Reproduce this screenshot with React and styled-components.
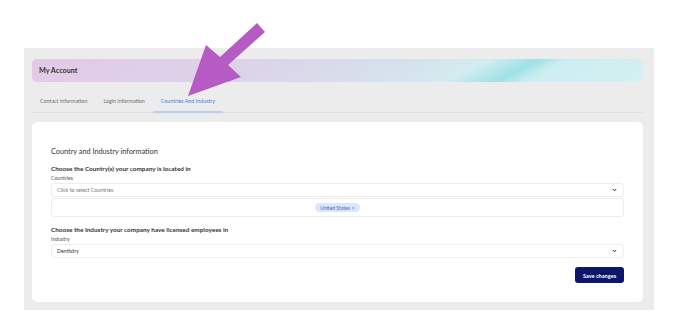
import styled, { createGlobalStyle } from "styled-components";

const GlobalStyle = createGlobalStyle`
  html, body {
    margin: 0;
    padding: 0;
    background: #ffffff;
    font-family: "Lato", "Open Sans", sans-serif;
  }
`;

const Page = styled.div`
  position: relative;
  width: 688px;
  height: 324px;
  padding: 48px 0 0 24px;
  box-sizing: border-box;
`;

const Panel = styled.div`
  width: 630px;
  height: 262px;
  background: #ececec;
  padding: 11px 11px 8px 8px;
  box-sizing: border-box;
  display: flex;
  flex-direction: column;
`;

const Banner = styled.div`
  height: 23px;
  border-radius: 5px;
  background: linear-gradient(
    152deg,
    #e3c9e6 0%,
    #dcd3e9 35%,
    #d6e2ec 60%,
    #d3ecf0 70%,
    #ade4e9 75.5%,
    #9fe1e7 77.5%,
    #cdeef1 82%,
    #d3eff1 100%
  );
  display: flex;
  align-items: center;
  padding-left: 7px;
  font-size: 7.2px;
  font-weight: 700;
  color: #333333;
`;

const Tabs = styled.div`
  margin-top: 8px;
  height: 22px;
  display: flex;
  border-bottom: 1px solid #e0e0e0;
`;

const Tab = styled.div`
  padding: 0 8px;
  display: flex;
  align-items: center;
  font-size: 5.35px;
  color: ${(p) => (p.$active ? "#4c7be3" : "#707070")};
  border-bottom: 2px solid ${(p) => (p.$active ? "#bccdf3" : "transparent")};
  margin-bottom: -1px;
`;

const Card = styled.div`
  margin-top: 9px;
  flex: 1;
  background: #ffffff;
  border-radius: 5px;
  padding: 25px 19px 0 19px;
  display: flex;
  flex-direction: column;
`;

const Title = styled.div`
  font-size: 7.3px;
  font-weight: 400;
  color: #333333;
  line-height: 10px;
`;

const Question = styled.div`
  margin-top: ${(p) => p.$mt}px;
  font-size: 6.4px;
  font-weight: 700;
  color: #333333;
  line-height: 8px;
`;

const FieldLabel = styled.div`
  font-size: 5.2px;
  color: #555555;
  line-height: 10px;
`;

const Select = styled.div`
  height: 14px;
  border: 1px solid #ededed;
  border-radius: 3px;
  box-sizing: border-box;
  display: flex;
  align-items: center;
  justify-content: space-between;
  padding: 0 6px 0 5px;
  font-size: 5.3px;
  color: ${(p) => (p.$muted ? "#777777" : "#3a3a3a")};
`;

const TagBox = styled.div`
  margin-top: 1px;
  height: 19px;
  border: 1px solid #ededed;
  border-radius: 3px;
  box-sizing: border-box;
  display: flex;
  align-items: center;
  justify-content: center;
`;

const Tag = styled.span`
  background: #dbe6fb;
  color: #4b67b0;
  font-size: 5px;
  border-radius: 5px;
  padding: 1.5px 5px;
  display: inline-flex;
  align-items: center;
  gap: 2px;
`;

const Actions = styled.div`
  margin-top: 9px;
  display: flex;
  justify-content: flex-end;
`;

const SaveButton = styled.button`
  width: 49px;
  height: 16px;
  border: none;
  border-radius: 3px;
  background: #0c176b;
  color: #ffffff;
  font-family: "Lato", "Open Sans", sans-serif;
  font-size: 5.6px;
  font-weight: 700;
  padding: 0;
`;

const Arrow = styled.svg`
  position: absolute;
  left: 0;
  top: 0;
  pointer-events: none;
`;

const Chevron = () => (
  <svg width="5" height="4" viewBox="0 0 5 4">
    <path d="M0.8 1 L2.5 2.8 L4.2 1" fill="none" stroke="#333" strokeWidth="1" />
  </svg>
);

export default function App() {
  return (
    <>
      <GlobalStyle />
      <Page>
        <Panel>
          <Banner>My Account</Banner>
          <Tabs>
            <Tab>Contact Information</Tab>
            <Tab>Login Information</Tab>
            <Tab $active>Countries And Industry</Tab>
          </Tabs>
          <Card>
            <Title>Country and Industry information</Title>
            <Question $mt={8}>Choose the Country(s) your company is located in</Question>
            <FieldLabel>Countries</FieldLabel>
            <Select $muted>
              Click to select Countries
              <Chevron />
            </Select>
            <TagBox>
              <Tag>
                United States <span>×</span>
              </Tag>
            </TagBox>
            <Question $mt={9}>Choose the Industry your company have licensed employees in</Question>
            <FieldLabel>Industry</FieldLabel>
            <Select>
              Dentistry
              <Chevron />
            </Select>
            <Actions>
              <SaveButton>Save changes</SaveButton>
            </Actions>
          </Card>
        </Panel>
        <Arrow width="688" height="324" viewBox="0 0 688 324">
          <polygon
            points="257,23 265,32 228,65 241,77 188,96 206,45 220,57"
            fill="#b65bc3"
          />
        </Arrow>
      </Page>
    </>
  );
}
